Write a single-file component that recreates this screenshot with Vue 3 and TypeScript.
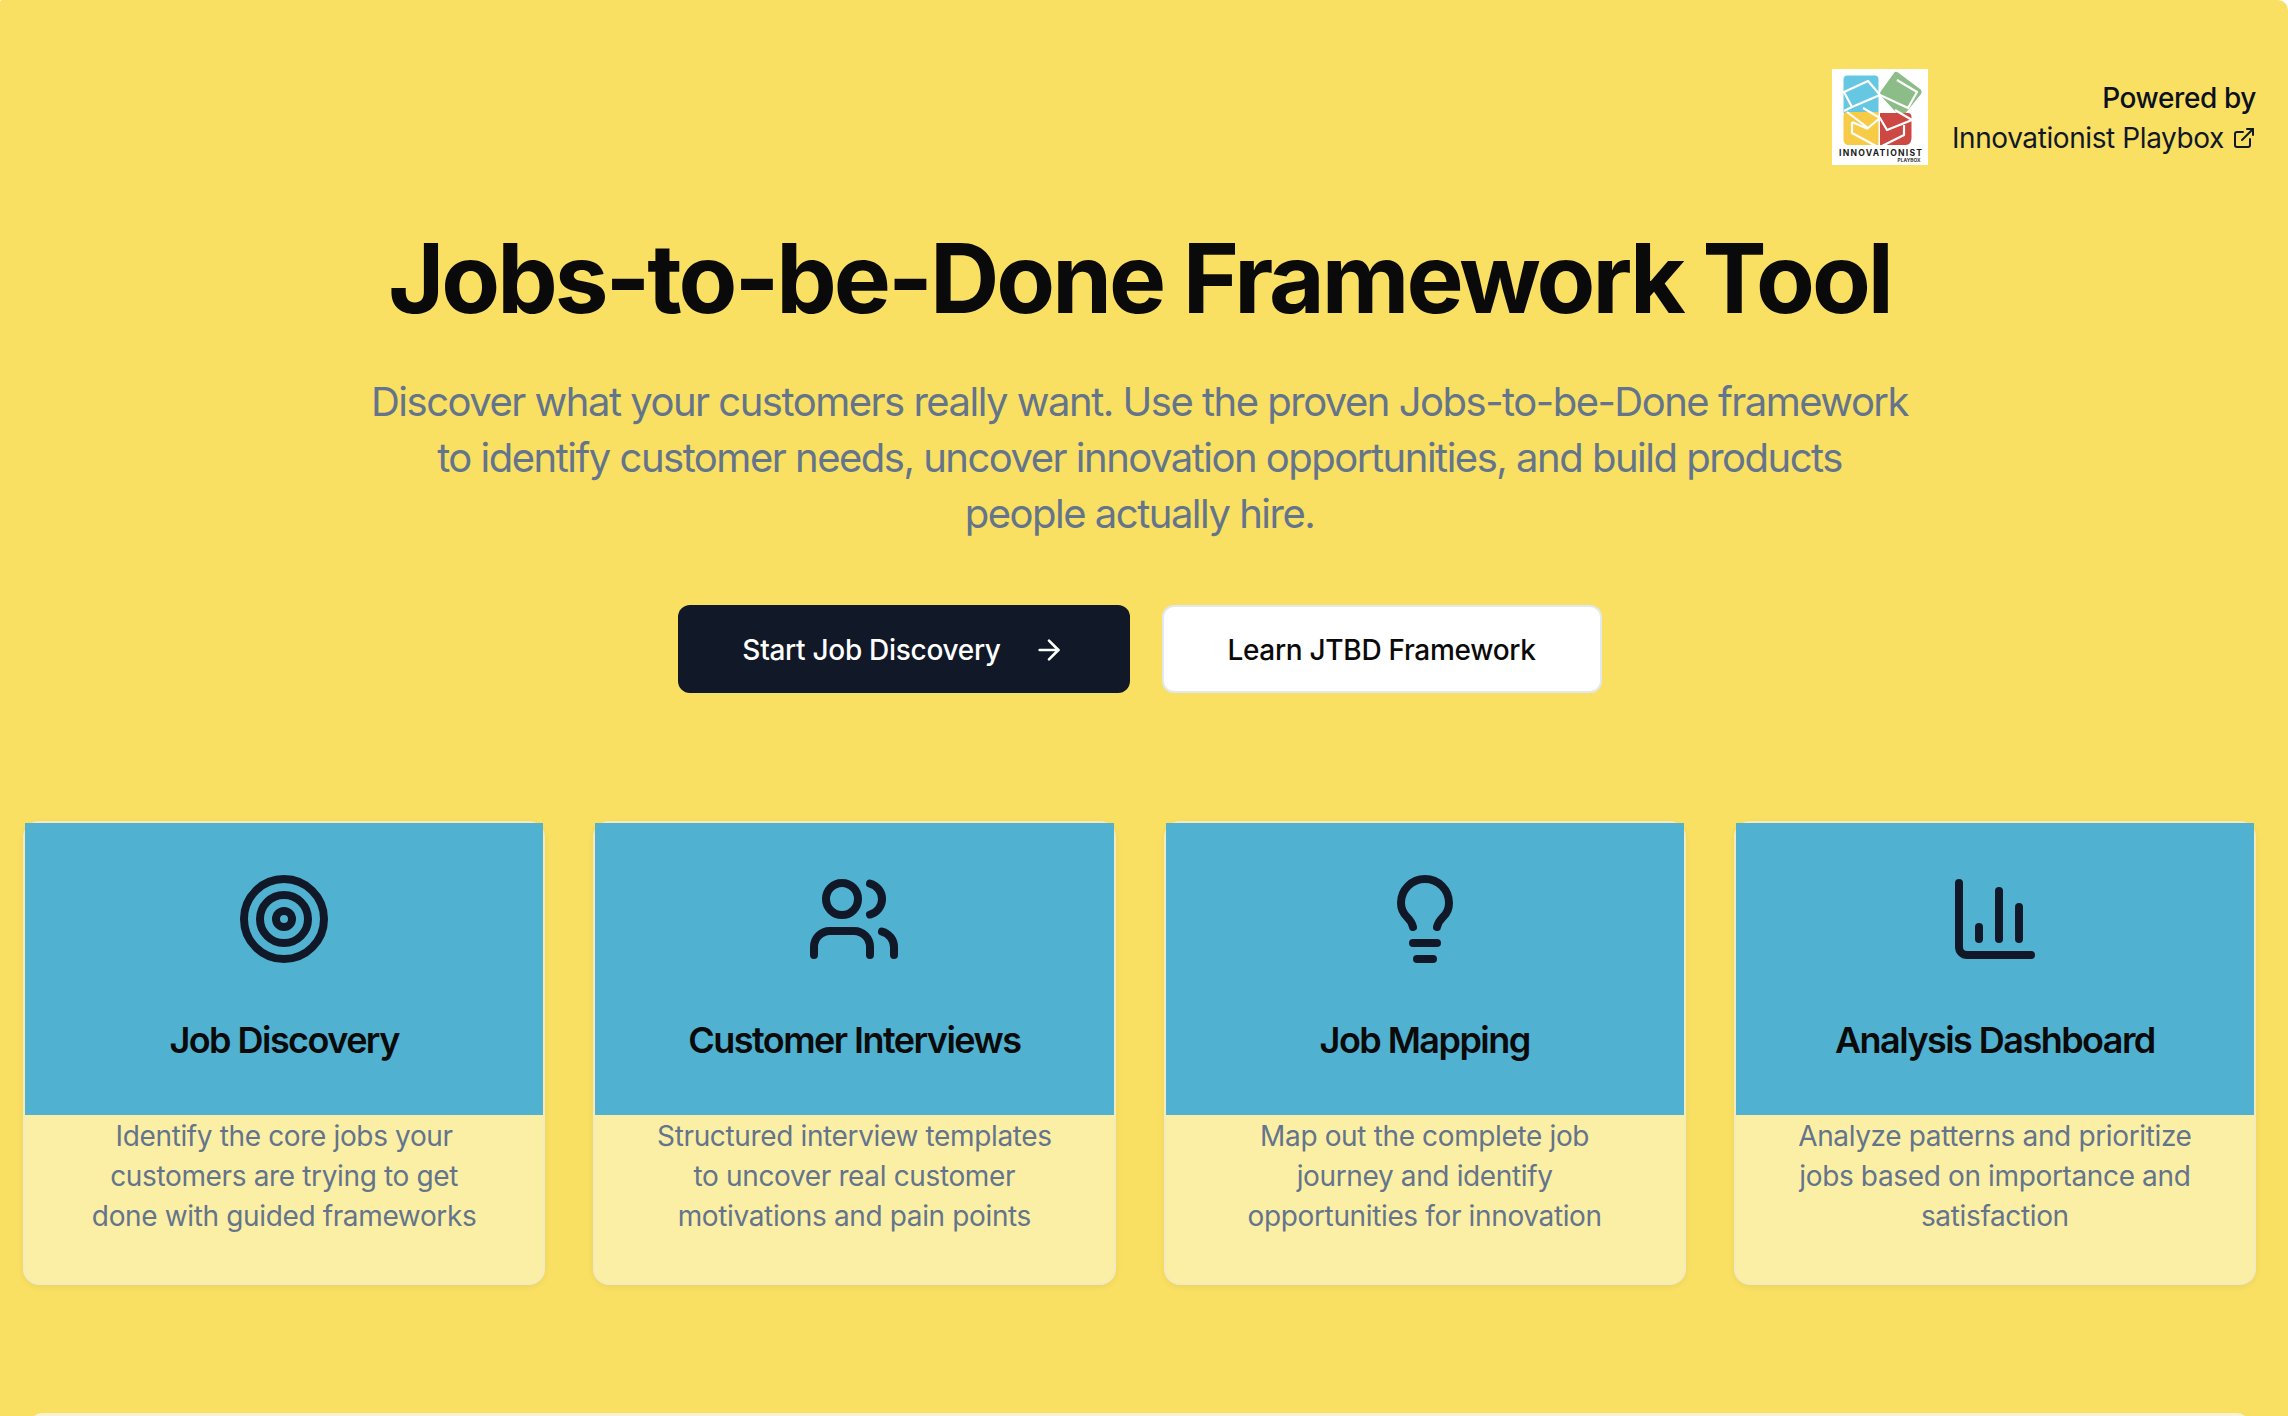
<script setup lang="ts">
interface Feature {
  title: string
  lines: string[]
  icon: 'target' | 'users' | 'bulb' | 'chart'
}

const features: Feature[] = [
  { title: 'Job Discovery', icon: 'target', lines: ['Identify the core jobs your', 'customers are trying to get', 'done with guided frameworks'] },
  { title: 'Customer Interviews', icon: 'users', lines: ['Structured interview templates', 'to uncover real customer', 'motivations and pain points'] },
  { title: 'Job Mapping', icon: 'bulb', lines: ['Map out the complete job', 'journey and identify', 'opportunities for innovation'] },
  { title: 'Analysis Dashboard', icon: 'chart', lines: ['Analyze patterns and prioritize', 'jobs based on importance and', 'satisfaction'] },
]
</script>

<template>
  <div class="page">
    <header class="brand">
      <svg class="logo" viewBox="0 0 96 96" role="img" aria-label="Innovationist Playbox logo">
        <rect width="96" height="96" fill="#fff" />
        <rect x="11.5" y="6.5" width="35" height="40" rx="4" fill="#66c7e3" />
        <path d="M66 3.5 88 20c2 1.500 2 3 1 5L72 46c-1.500 1.500-3 1.500-5 .5L49 27c-1.500-1.500-1.500-3 0-5L62 4c1-1.500 2.500-1.500 4-.5z" fill="#8cbd88" />
        <path d="M11.500 47c0-2 1-4 4-4h31v33H17c-3.500 0-5.500-2-5.500-6z" fill="#f8cb47" />
        <path d="M48 44h28c2 0 3.500 1.500 3.500 4v20c0 5-2 8-6 8H48z" fill="#cd4743" />
        <g fill="none" stroke="#fff" stroke-width="2.200" stroke-linejoin="round">
          <path d="M12 23 36 12l12 14-28 12zM20 38l-8 4" />
          <path d="M65 11l20 12-9 16-28-13" />
          <path d="M15 43l21 16 12-10-17-10M20 53l16 7M20 53v11l26 14" />
          <path d="M48 49l7 12 25-10-17-10M72 56v10L48 78" />
        </g>
        <text x="7" y="87" textLength="83" lengthAdjust="spacing" class="logo-name">INNOVATIONIST</text>
        <text x="65.500" y="93.300" textLength="23" lengthAdjust="spacingAndGlyphs" class="logo-sub">PLAYBOX</text>
      </svg>
      <div class="brand-text">
        <span class="powered">Powered by</span>
        <a class="playbox">
          Innovationist Playbox
          <svg class="ext" viewBox="0 0 24 24" fill="none" stroke="currentColor" stroke-width="2" stroke-linecap="round" stroke-linejoin="round">
            <path d="M18 13v6a2 2 0 0 1-2 2H5a2 2 0 0 1-2-2V8a2 2 0 0 1 2-2h6" />
            <path d="M15 3h6v6" />
            <path d="M10 14 21 3" />
          </svg>
        </a>
      </div>
    </header>

    <section class="hero">
      <h1>Jobs-to-be-Done Framework Tool</h1>
      <p class="lead">
        Discover what your customers really want. Use the proven Jobs-to-be-Done framework<br />
        to identify customer needs, uncover innovation opportunities, and build products<br />
        people actually hire.
      </p>
      <div class="actions">
        <button class="btn primary">
          Start Job Discovery
          <svg class="arrow" viewBox="0 0 24 24" fill="none" stroke="currentColor" stroke-width="2" stroke-linecap="round" stroke-linejoin="round">
            <path d="M5 12h14" />
            <path d="m12 5 7 7-7 7" />
          </svg>
        </button>
        <button class="btn secondary">Learn JTBD Framework</button>
      </div>
    </section>

    <section class="cards">
      <article v-for="f in features" :key="f.title" class="card">
        <div class="card-head">
          <svg class="icon" viewBox="0 0 24 24" fill="none" stroke="currentColor" stroke-width="2" stroke-linecap="round" stroke-linejoin="round">
            <template v-if="f.icon === 'target'">
              <circle cx="12" cy="12" r="10" />
              <circle cx="12" cy="12" r="6" />
              <circle cx="12" cy="12" r="2" />
            </template>
            <template v-else-if="f.icon === 'users'">
              <path d="M16 21v-2a4 4 0 0 0-4-4H6a4 4 0 0 0-4 4v2" />
              <circle cx="9" cy="7" r="4" />
              <path d="M22 21v-2a4 4 0 0 0-3-3.870" />
              <path d="M16 3.130a4 4 0 0 1 0 7.750" />
            </template>
            <template v-else-if="f.icon === 'bulb'">
              <path d="M15 14c.2-1 .7-1.700 1.500-2.500 1-.9 1.500-2.200 1.500-3.500A6 6 0 0 0 6 8c0 1 .2 2.200 1.500 3.500.7.7 1.300 1.500 1.500 2.500" />
              <path d="M9 18h6" />
              <path d="M10 22h4" />
            </template>
            <template v-else>
              <path d="M3 3v16a2 2 0 0 0 2 2h16" />
              <path d="M8 17v-3" />
              <path d="M13 17V5" />
              <path d="M18 17V9" />
            </template>
          </svg>
          <h3>{{ f.title }}</h3>
        </div>
        <p class="desc">
          <template v-for="(l, i) in f.lines" :key="i">{{ l }}<br /></template>
        </p>
      </article>
    </section>

    <div class="next-panel"></div>
  </div>
</template>

<style>
html,
body {
  margin: 0;
  background: #fff;
}
</style>

<style scoped>
.page {
  box-sizing: border-box;
  height: 1416px;
  overflow: hidden;
  background: #f9e063;
  border-radius: 2px 10px 0 0;
  padding: 69px 32px 0 23px;
  font-family: Inter, "Liberation Sans", sans-serif;
  color: #111827;
  display: flex;
  flex-direction: column;
}

.brand {
  display: flex;
  justify-content: flex-end;
  align-items: center;
  gap: 24px;
  height: 96px;
}

.logo {
  width: 96px;
  height: 96px;
  flex: none;
}

.logo-name {
  font: 700 8.6px Inter, sans-serif;
  fill: #1a1a1a;
}

.logo-sub {
  font: 700 5px Inter, sans-serif;
  fill: #333;
}

.brand-text {
  display: flex;
  flex-direction: column;
  align-items: flex-end;
  font-size: 28px;
  line-height: 40px;
  letter-spacing: -0.4px;
  padding-top: 1px;
}

.powered {
  font-weight: 500;
  color: #0b1120;
}

.playbox {
  display: flex;
  align-items: center;
  gap: 8px;
  color: #111827;
}

.ext {
  width: 24px;
  height: 24px;
}

.hero {
  display: flex;
  flex-direction: column;
  align-items: center;
  text-align: center;
}

h1 {
  margin: 65px 0 0;
  font-size: 96px;
  line-height: 96px;
  font-weight: 700;
  letter-spacing: -3px;
  color: #0a0a0a;
}

.lead {
  margin: 48px 0 0;
  font-size: 40px;
  line-height: 56px;
  letter-spacing: -1.5px;
  color: #64748b;
}

.actions {
  display: flex;
  gap: 32px;
  margin-top: 63px;
}

.btn {
  box-sizing: border-box;
  height: 88px;
  padding-top: 2px;
  border-radius: 12px;
  font: 500 28px/40px Inter, sans-serif;
  letter-spacing: -0.3px;
  display: flex;
  align-items: center;
  justify-content: center;
  cursor: pointer;
}

.primary {
  width: 452px;
  gap: 32px;
  background: #111827;
  color: #fff;
  border: 0;
}

.arrow {
  width: 32px;
  height: 32px;
}

.secondary {
  width: 440px;
  background: #fff;
  color: #0a0a0a;
  border: 2px solid #e2e8f0;
}

.cards {
  display: grid;
  grid-template-columns: repeat(4, 1fr);
  gap: 48px;
  margin-top: 128px;
}

.card {
  box-sizing: border-box;
  height: 464px;
  background: #fbefa6;
  border: 2px solid #f3ebbf;
  border-radius: 16px;
  box-shadow: 0 2px 6px rgba(0, 0, 0, 0.06);
}

.card-head {
  height: 292px;
  background: #50b1d1;
  display: flex;
  flex-direction: column;
  align-items: center;
  color: #111827;
}

.icon {
  width: 96px;
  height: 96px;
  margin-top: 48px;
}

h3 {
  margin: 45px 0 0;
  font-size: 36px;
  line-height: 56px;
  font-weight: 600;
  letter-spacing: -1.55px;
  color: #0a0a0a;
}

.desc {
  margin: 0;
  padding-top: 1px;
  text-align: center;
  font-size: 28px;
  line-height: 40px;
  letter-spacing: -0.36px;
  color: #64748b;
}

.next-panel {
  flex: none;
  height: 40px;
  margin: 128px 7px 0 7px;
  background: #f9f3cf;
  border-radius: 12px 12px 0 0;
}
</style>
